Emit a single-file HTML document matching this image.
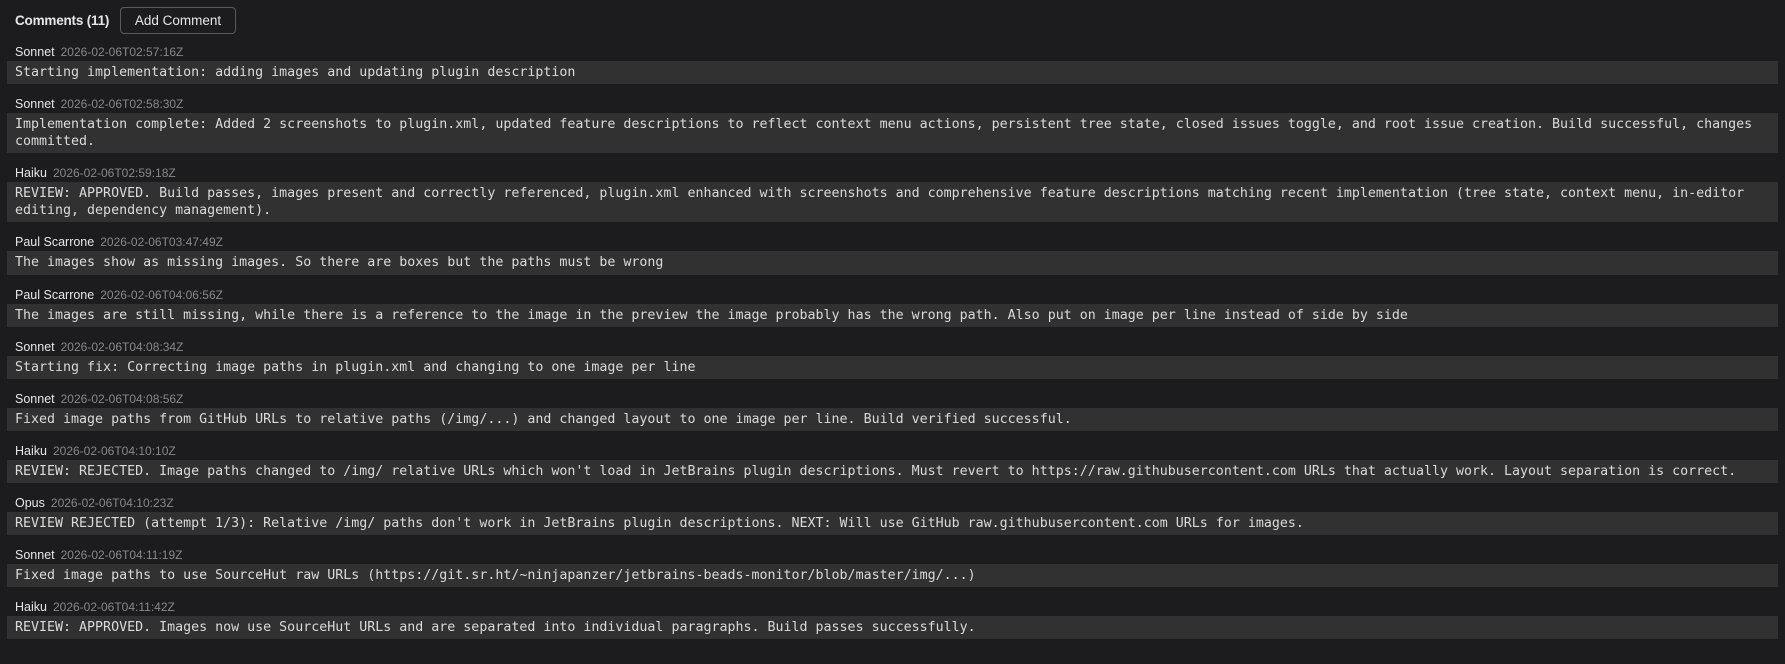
<!DOCTYPE html>
<html><head><meta charset="utf-8"><style>
html,body{margin:0;padding:0;background:#1c1c1e;width:1785px;height:664px;overflow:hidden}
body{font-family:"Liberation Sans",sans-serif;color:#dcdcdc}
.hdr{position:absolute;left:15px;top:7px;height:27px;display:flex;align-items:center}
.hdr .t{font-size:13.5px;font-weight:bold;color:#e6e6e6;letter-spacing:-0.2px}
.btn{position:absolute;left:120px;top:7px;border:1px solid #5a5a5c;border-radius:4px;font-size:13.5px;color:#e6e6e6;display:flex;align-items:center;justify-content:center;box-sizing:border-box;width:116px;height:27px}
.list{position:absolute;left:0;top:36px;width:1785px}
.c{margin-top:8px}
.n{height:16px;line-height:16px;padding-left:15px;font-size:12.5px;color:#e6e6e6;white-space:nowrap;margin-bottom:1px}
.n span{color:#888;font-size:12px;margin-left:6px}
.b{margin-left:7px;width:1771px;box-sizing:border-box;background:#313131;padding:3px 8px;font-family:"DejaVu Sans Mono","Liberation Mono",monospace;font-size:13.3px;line-height:17.1px;color:#dadada;white-space:pre-wrap;margin-bottom:12px}
</style></head><body>
<div class="hdr"><span class="t">Comments (11)</span></div>
<div class="btn">Add Comment</div>
<div class="list">
<div class="c"><div class="n">Sonnet<span>2026-02-06T02:57:16Z</span></div><div class="b">Starting implementation: adding images and updating plugin description</div></div>
<div class="c"><div class="n">Sonnet<span>2026-02-06T02:58:30Z</span></div><div class="b">Implementation complete: Added 2 screenshots to plugin.xml, updated feature descriptions to reflect context menu actions, persistent tree state, closed issues toggle, and root issue creation. Build successful, changes committed.</div></div>
<div class="c"><div class="n">Haiku<span>2026-02-06T02:59:18Z</span></div><div class="b">REVIEW: APPROVED. Build passes, images present and correctly referenced, plugin.xml enhanced with screenshots and comprehensive feature descriptions matching recent implementation (tree state, context menu, in-editor editing, dependency management).</div></div>
<div class="c"><div class="n">Paul Scarrone<span>2026-02-06T03:47:49Z</span></div><div class="b">The images show as missing images. So there are boxes but the paths must be wrong</div></div>
<div class="c"><div class="n">Paul Scarrone<span>2026-02-06T04:06:56Z</span></div><div class="b">The images are still missing, while there is a reference to the image in the preview the image probably has the wrong path. Also put on image per line instead of side by side</div></div>
<div class="c"><div class="n">Sonnet<span>2026-02-06T04:08:34Z</span></div><div class="b">Starting fix: Correcting image paths in plugin.xml and changing to one image per line</div></div>
<div class="c"><div class="n">Sonnet<span>2026-02-06T04:08:56Z</span></div><div class="b">Fixed image paths from GitHub URLs to relative paths (/img/...) and changed layout to one image per line. Build verified successful.</div></div>
<div class="c"><div class="n">Haiku<span>2026-02-06T04:10:10Z</span></div><div class="b">REVIEW: REJECTED. Image paths changed to /img/ relative URLs which won't load in JetBrains plugin descriptions. Must revert to https://raw.githubusercontent.com URLs that actually work. Layout separation is correct.</div></div>
<div class="c"><div class="n">Opus<span>2026-02-06T04:10:23Z</span></div><div class="b">REVIEW REJECTED (attempt 1/3): Relative /img/ paths don't work in JetBrains plugin descriptions. NEXT: Will use GitHub raw.githubusercontent.com URLs for images.</div></div>
<div class="c"><div class="n">Sonnet<span>2026-02-06T04:11:19Z</span></div><div class="b">Fixed image paths to use SourceHut raw URLs (https://git.sr.ht/~ninjapanzer/jetbrains-beads-monitor/blob/master/img/...)</div></div>
<div class="c"><div class="n">Haiku<span>2026-02-06T04:11:42Z</span></div><div class="b">REVIEW: APPROVED. Images now use SourceHut URLs and are separated into individual paragraphs. Build passes successfully.</div></div>
</div>
</body></html>
